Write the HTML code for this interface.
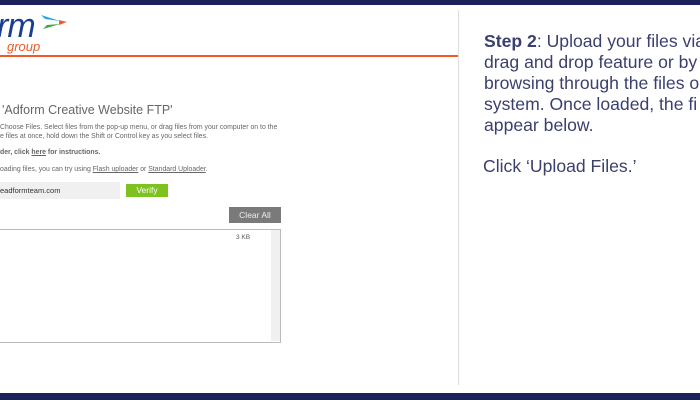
<!DOCTYPE html>
<html><head><style>
body{margin:0;width:700px;height:400px;position:relative;overflow:hidden;background:#fff;font-family:"Liberation Sans",sans-serif}
.a{position:absolute;white-space:nowrap}
.s{font-size:6.9px;color:#666}
.r{font-size:17.6px;color:#3a3f6e;line-height:21px}
</style></head><body>
<div class="a" style="left:0;top:0;width:700px;height:5px;background:#1b2258"></div>
<div class="a" style="left:0;top:393px;width:700px;height:7px;background:#1b2258"></div>
<div class="a" style="left:0;top:55px;width:458px;height:2px;background:#f05a28"></div>
<div class="a" style="left:458px;top:10px;width:1px;height:375px;background:#ddd"></div>
<div class="a" style="left:-3px;top:7px;font-size:34px;font-style:italic;color:#1b3f8f;letter-spacing:-1px">rm</div>
<div class="a" style="left:7px;top:39px;font-size:13px;font-style:italic;color:#f05a28">group</div>
<svg class="a" style="left:40px;top:14px" width="28" height="16"><path d="M1 1 L20 7 L5 5Z" fill="#29a8e0"/><path d="M19 6 L27 8 L19 11Z" fill="#f05a28"/><path d="M3 15 L20 10 L7 11Z" fill="#3aa935"/></svg>
<div class="a" style="left:2px;top:103px;font-size:12.5px;color:#666">'Adform Creative Website FTP'</div>
<div class="a s" style="left:0;top:124px">Choose Files. Select files from the pop-up menu, or drag files from your computer on to the</div>
<div class="a s" style="left:0;top:133px">e files at once, hold down the Shift or Control key as you select files.</div>
<div class="a s" style="left:0;top:149px;font-weight:bold">der, click <u>here</u> for instructions.</div>
<div class="a s" style="left:0;top:166px">oading files, you can try using <u>Flash uploader</u> or <u>Standard Uploader</u>.</div>
<div class="a" style="left:0;top:182px;width:120px;height:17px;background:#f0f0f0"></div>
<div class="a" style="left:0;top:186px;font-size:7.5px;color:#333">eadformteam.com</div>
<div class="a" style="left:126px;top:184px;width:42px;height:13px;background:#7dc21e;color:#fff;font-size:8.5px;text-align:center;line-height:13px">Verify</div>
<div class="a" style="left:229px;top:207px;width:52px;height:16px;background:#7a7a7a;color:#eee;font-size:8.5px;text-align:center;line-height:16px">Clear All</div>
<div class="a" style="left:-1px;top:229px;width:280px;height:112px;border:1px solid #bbb"></div>
<div class="a" style="left:271px;top:230px;width:9px;height:111px;background:#f0f0f0"></div>
<div class="a" style="left:236px;top:234px;font-size:6.5px;color:#555">3 KB</div>
<div class="a r" style="left:484px;top:31px"><b>Step 2</b>: Upload your files via<br>drag and drop feature or by<br>browsing through the files o<br>system. Once loaded, the fi<br>appear below.</div>
<div class="a r" style="left:483px;top:156px">Click ‘Upload Files.’</div>
</body></html>
